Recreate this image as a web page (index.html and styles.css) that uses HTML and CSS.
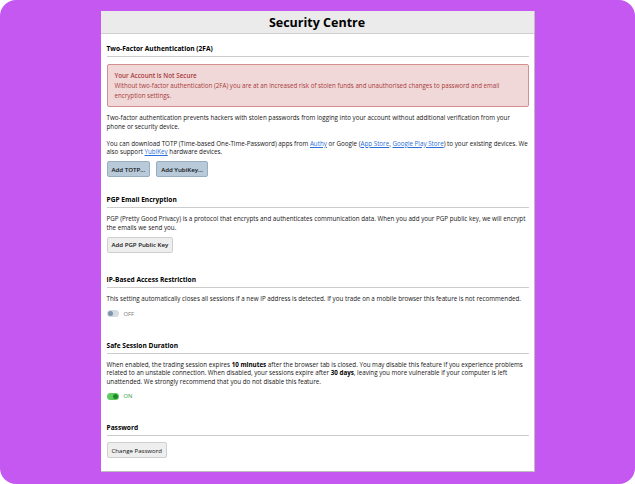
FILE: index.html
```html
<!DOCTYPE html>
<html>
<head>
<meta charset="utf-8">
<link rel="stylesheet" href="styles.css">
</head>
<body>
<div class="page">
  <div class="card">
    <div class="card-header">Security Centre</div>
    <div class="card-body">
      <section class="section first">
        <h2 class="section-title">Two-Factor Authentication (2FA)</h2>
        <div class="alert">
          <div class="alert-title">Your Account is Not Secure</div>
          <div class="alert-text">Without two-factor authentication (2FA) you are at an increased risk of stolen funds and unauthorised changes to password and email encryption settings.</div>
        </div>
        <p class="text">Two-factor authentication prevents hackers with stolen passwords from logging into your account without additional verification from your phone or security device.</p>
        <p class="text">You can download TOTP (Time-based One-Time-Password) apps from <a href="#">Authy</a> or Google (<a href="#">App Store</a>, <a href="#">Google Play Store</a>) to your existing devices. We also support <a href="#">YubiKey</a> hardware devices.</p>
        <div class="buttons">
          <button class="btn btn-blue">Add TOTP...</button>
          <button class="btn btn-blue">Add YubiKey...</button>
        </div>
      </section>
      <section class="section s-pgp">
        <h2 class="section-title">PGP Email Encryption</h2>
        <p class="text">PGP (Pretty Good Privacy) is a protocol that encrypts and authenticates communication data. When you add your PGP public key, we will encrypt the emails we send you.</p>
        <div class="buttons">
          <button class="btn btn-grey">Add PGP Public Key</button>
        </div>
      </section>
      <section class="section s-ip">
        <h2 class="section-title">IP-Based Access Restriction</h2>
        <p class="text">This setting automatically closes all sessions if a new IP address is detected. If you trade on a mobile browser this feature is not recommended.</p>
        <div class="toggle-row">
          <span class="toggle off"><span class="knob"></span></span>
          <span class="toggle-label off-label">OFF</span>
        </div>
      </section>
      <section class="section s-session">
        <h2 class="section-title">Safe Session Duration</h2>
        <p class="text tight">When enabled, the trading session expires <b>10 minutes</b> after the browser tab is closed. You may disable this feature if you experience problems related to an unstable connection. When disabled, your sessions expire after <b>30 days</b>, leaving you more vulnerable if your computer is left unattended. We strongly recommend that you do not disable this feature.</p>
        <div class="toggle-row">
          <span class="toggle on"><span class="knob"></span></span>
          <span class="toggle-label on-label">ON</span>
        </div>
      </section>
      <section class="section s-pass">
        <h2 class="section-title">Password</h2>
        <div class="buttons">
          <button class="btn btn-grey">Change Password</button>
        </div>
      </section>
    </div>
  </div>
</div>
</body>
</html>
```

FILE: styles.css
```css
* { box-sizing: border-box; }
html, body {
  margin: 0;
  padding: 0;
  background: #ffffff;
}
.page {
  width: 635px;
  height: 484px;
  background: #c458f1;
  border-radius: 16px;
  padding-top: 11px;
  display: flex;
  justify-content: center;
  align-items: flex-start;
  font-family: "Open Sans", "Liberation Sans", sans-serif;
  color: #1a1a1a;
}
.card {
  width: 434px;
  height: 461px;
  background: #ffffff;
  border-right: 1px solid #bdbdbd;
  border-bottom: 1px solid #bdbdbd;
}
.card-header {
  height: 23px;
  background: #ebebeb;
  border-bottom: 1px solid #cfcfcf;
  text-align: center;
  font-weight: 700;
  font-size: 12.5px;
  line-height: 23px;
  color: #000;
}
.card-body {
  padding: 0 5px 0 6px;
}
.section-title {
  margin: 0;
  font-size: 6.6px;
  font-weight: 700;
  line-height: 9px;
  padding-bottom: 3px;
  border-bottom: 1px solid #cccccc;
  color: #000;
}
.section.first { padding-top: 10px; }
.s-pgp { padding-top: 18px; }
.s-ip { padding-top: 22px; }
.s-session { padding-top: 23px; }
.s-pass { padding-top: 23px; }
.text {
  margin: 7px 0 0;
  font-size: 6.25px;
  line-height: 8.8px;
  color: #161616;
}
.text.tight { line-height: 8.5px; }
.section-title + .text { margin-top: 7px; }
.text + .text { margin-top: 8px; }
.text b { font-weight: 700; color: #000; }
.text a { color: #2a6fdb; text-decoration: underline; }
.alert {
  margin-top: 7px;
  background: #f0d8d8;
  border: 1px solid #d38f8f;
  border-radius: 2px;
  padding: 6px 7px 6px;
  color: #a83a3a;
}
.alert-title {
  font-size: 6.3px;
  font-weight: 600;
  line-height: 9px;
}
.alert-text {
  margin-top: 1px;
  font-size: 6.2px;
  line-height: 9.5px;
}
.buttons {
  display: flex;
  gap: 6px;
  margin-top: 4px;
}
.section-title + .buttons { margin-top: 6px; }
.btn {
  font-family: "Open Sans", "Liberation Sans", sans-serif;
  font-size: 6.1px;
  font-weight: 600;
  height: 16px;
  padding: 0 4px;
  border-radius: 2px;
  color: #111;
  cursor: pointer;
}
.btn-blue {
  background: #b8cad9;
  border: 1px solid #98adc0;
}
.btn-grey {
  background: #eeeeee;
  border: 1px solid #cfcfcf;
}
.s-pass .btn { font-weight: 400; }
.toggle-row {
  display: flex;
  align-items: center;
  gap: 5px;
  margin-top: 6px;
}
.toggle {
  width: 12px;
  height: 7px;
  border-radius: 4px;
  display: flex;
  align-items: center;
  padding: 0 1px;
}
.toggle .knob {
  width: 5px;
  height: 5px;
  border-radius: 50%;
}
.toggle.off { background: #d5dbe3; justify-content: flex-start; }
.toggle.off .knob { background: #7f93ab; }
.toggle.on { background: #5ecb5e; justify-content: flex-end; }
.toggle.on .knob { background: #1f8a2a; }
.toggle-label {
  font-size: 5.8px;
  line-height: 8px;
}
.off-label { color: #777; }
.on-label { color: #2d9a3a; }
```
